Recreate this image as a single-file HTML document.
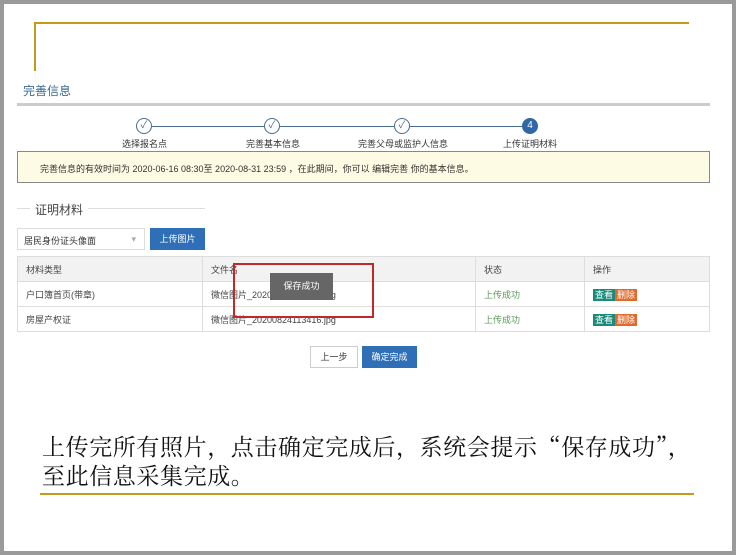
<!DOCTYPE html>
<html><head><meta charset="utf-8"><style>
*{margin:0;padding:0;box-sizing:border-box}
body{width:736px;height:555px;background:#9a9a9a;position:relative;overflow:hidden;font-family:"Liberation Sans","Noto Sans CJK SC",sans-serif;}
.pg{position:absolute;left:4px;top:4px;width:728px;height:547px;background:#fff}
.a{position:absolute}
.t{font-size:9px;color:#333;white-space:nowrap}
.c{width:16px;height:16px;border:1px solid #4a6e92;border-radius:50%;background:#fff;text-align:center;font-size:10px;line-height:14px;color:#4a6e92}
td{border:1px solid #ddd;font-size:9px;color:#444;padding-left:8px;height:25px}
table{border-collapse:collapse}
</style></head><body>
<div class="pg"></div>
<div class="a" style="left:34px;top:22px;width:655px;height:2px;background:#c49a1c"></div>
<div class="a" style="left:34px;top:22px;width:2px;height:49px;background:#c49a1c"></div>
<div class="a" style="left:23px;top:82px;font-size:12px;color:#3a6a95">完善信息</div>
<div class="a" style="left:17px;top:103px;width:693px;height:3px;background:#ccc"></div>
<div class="a" style="left:152px;top:126px;width:378px;height:1px;background:#4a6e92"></div>
<div class="a c" style="left:136px;top:118px">✓</div>
<div class="a c" style="left:264px;top:118px">✓</div>
<div class="a c" style="left:394px;top:118px">✓</div>
<div class="a c" style="left:522px;top:118px;background:#2f68a6;color:#fff;border-color:#2f68a6">4</div>
<div class="a t" style="left:122px;top:137px">选择报名点</div>
<div class="a t" style="left:246px;top:137px">完善基本信息</div>
<div class="a t" style="left:358px;top:137px">完善父母或监护人信息</div>
<div class="a t" style="left:503px;top:137px">上传证明材料</div>
<div class="a" style="left:17px;top:151px;width:693px;height:32px;background:#fdfbe3;border:1px solid #888"></div>
<div class="a t" style="left:40px;top:162px">完善信息的有效时间为 2020-06-16 08:30至 2020-08-31 23:59 ，在此期间，你可以 编辑完善 你的基本信息。</div>
<div class="a" style="left:17px;top:208px;width:188px;height:1px;background:#ddd"></div>
<div class="a" style="left:30px;top:201px;background:#fff;padding:0 5px;font-size:12px;color:#444">证明材料</div>
<div class="a" style="left:17px;top:228px;width:128px;height:22px;border:1px solid #ddd;font-size:9px;color:#333;padding:5px 6px">居民身份证头像面<span style="position:absolute;right:8px;color:#aaa">▾</span></div>
<div class="a" style="left:150px;top:228px;width:55px;height:22px;background:#2f6fb7;color:#fff;font-size:9px;text-align:center;line-height:22px">上传图片</div>
<table class="a" style="left:17px;top:256px;width:693px">
<tr style="background:#f2f2f2"><td style="width:185px">材料类型</td><td style="width:273px">文件名</td><td style="width:109px">状态</td><td>操作</td></tr>
<tr><td>户口簿首页(带章)</td><td>微信图片_20200824113359.jpg</td><td style="color:#5a9a5a">上传成功</td><td><span style="background:#1a8a7a;color:#fff;padding:1px 2px">查看</span><span style="background:#e06a2a;color:#fff;padding:1px 2px">删除</span></td></tr>
<tr><td>房屋产权证</td><td>微信图片_20200824113416.jpg</td><td style="color:#5a9a5a">上传成功</td><td><span style="background:#1a8a7a;color:#fff;padding:1px 2px">查看</span><span style="background:#e06a2a;color:#fff;padding:1px 2px">删除</span></td></tr>
</table>
<div class="a" style="left:233px;top:263px;width:141px;height:55px;border:2px solid #c0282a"></div>
<div class="a" style="left:270px;top:273px;width:63px;height:27px;background:#666;color:#fff;font-size:9px;text-align:center;line-height:27px">保存成功</div>
<div class="a" style="left:310px;top:346px;width:48px;height:22px;border:1px solid #ccc;font-size:9px;color:#333;text-align:center;line-height:20px">上一步</div>
<div class="a" style="left:362px;top:346px;width:55px;height:22px;background:#2f6fb7;color:#fff;font-size:9px;text-align:center;line-height:22px">确定完成</div>
<div class="a" style="left:42px;top:431px;font-family:'Noto Serif CJK SC',serif;font-size:23px;letter-spacing:0.6px;line-height:29px;color:#111;white-space:nowrap">上传完所有照片，点击确定完成后，系统会提示“保存成功”，<br>至此信息采集完成。</div>
<div class="a" style="left:40px;top:493px;width:654px;height:2px;background:#c49a1c"></div>
</body></html>
